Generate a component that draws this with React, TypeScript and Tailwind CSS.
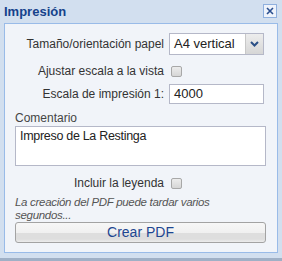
import React from "react";

function Checkbox() {
  return (
    <span className="inline-block w-[11px] h-[11px] rounded-[2px] border border-[#a8a8a8] bg-gradient-to-b from-[#ececec] to-[#d6d6d6]" />
  );
}

export default function App() {
  const font = { fontFamily: '"Liberation Sans", Arial, sans-serif' };
  return (
    <div
      className="w-[282px] h-[261px] bg-[#d2dfef] flex flex-col border-b-[3px] border-[#9fb0c6] overflow-hidden"
      style={font}
    >
      <div className="h-[23px] flex items-start justify-between pl-[4px] pr-[5px] pt-[4px]">
        <span className="text-[13px] font-bold text-[#15428b] leading-[15px]">Impresión</span>
        <span className="w-[14px] h-[14px] border border-[#8fb0de] bg-[#eef3fb] flex items-center justify-center">
          <svg width="10" height="10" viewBox="0 0 10 10">
            <path d="M2 2 L8 8 M8 2 L2 8" stroke="#2a4f8f" strokeWidth="1.6" />
          </svg>
        </span>
      </div>
      <div className="mx-[4px] h-[230px] border border-[#99bbe8] bg-[#f1f4f9] flex flex-col pl-[10px] pr-[11px] text-[12px] text-[#333]">
        <div className="flex items-center mt-[9px] h-[22px]">
          <span className="w-[150px] text-right pr-[1px]">Tamaño/orientación papel</span>
          <div className="ml-[4px] w-[95px] h-[22px] border border-[#b5b8c8] bg-white flex">
            <span className="flex-1 pl-[4px] leading-[20px] text-[13px] text-[#222]">A4 vertical</span>
            <span className="w-[18px] h-full border-l border-[#c8c8c8] bg-gradient-to-b from-[#ededed] to-[#d6d6d6] flex items-center justify-center">
              <svg width="9" height="6" viewBox="0 0 9 6">
                <path d="M1 1 L4.5 4.5 L8 1" fill="none" stroke="#2b4f86" strokeWidth="2" />
              </svg>
            </span>
          </div>
        </div>
        <div className="flex items-center mt-[8px] h-[16px]">
          <span className="w-[150px] text-right pr-[1px]">Ajustar escala a la vista</span>
          <span className="ml-[6px] flex"><Checkbox /></span>
        </div>
        <div className="flex items-center mt-[5px] h-[20px]">
          <span className="w-[150px] text-right pr-[1px]">Escala de impresión 1:</span>
          <div className="ml-[4px] w-[95px] h-[20px] border border-[#b5b8c8] bg-white pl-[4px] leading-[18px] text-[13px] text-[#222]">4000</div>
        </div>
        <div className="mt-[6px] leading-[16px] text-[#444]">Comentario</div>
        <div className="h-[40px] border border-[#b5b8c8] bg-white pl-[4px] pt-[2px] text-[12.5px] tracking-[-0.3px] text-[#222] leading-[15px]">Impreso de La Restinga</div>
        <div className="flex items-center mt-[9px] h-[16px]">
          <span className="w-[150px] text-right pr-[1px]">Incluir la leyenda</span>
          <span className="ml-[6px] flex"><Checkbox /></span>
        </div>
        <div className="mt-[5px] w-[220px] italic text-[#555] leading-[13px] text-[11.5px] tracking-[-0.3px]">
          La creación del PDF puede tardar varios segundos...
        </div>
        <div className="h-[21px] rounded-[3px] border border-[#a3a3a3] bg-[linear-gradient(#f7f7f7_0%,#f0f0f0_55%,#dedede_55%,#dedede_85%,#ececec_100%)] flex items-center justify-center text-[14px] text-[#1d4691]">
          Crear PDF
        </div>
      </div>
    </div>
  );
}
